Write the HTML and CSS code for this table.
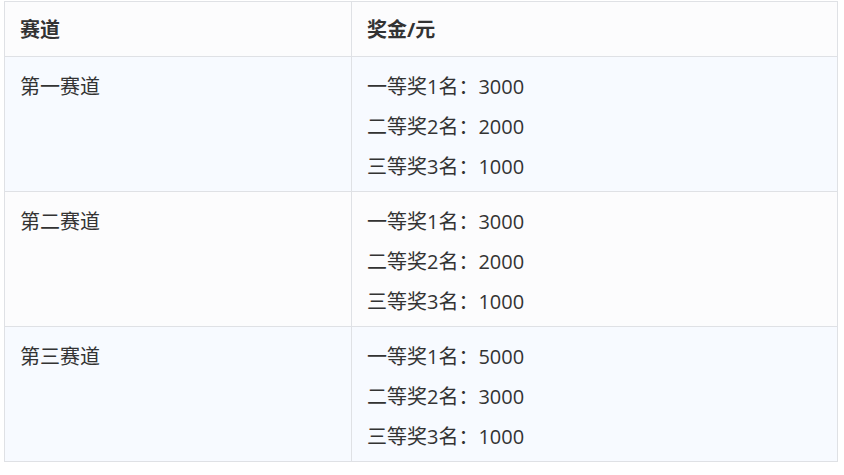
FILE: index.html
```html
<!DOCTYPE html>
<html lang="zh-CN">

<head>
    <meta charset="UTF-8">
    <title>赛道奖金</title>
    <link rel="stylesheet" href="styles.css">
</head>

<body>

    <!-- 奖金表 -->
    <table class="prize-table">
        <thead>
            <tr>
                <th class="col-track">赛道</th>
                <th>奖金/元</th>
            </tr>
        </thead>
        <tbody>
            <tr>
                <td>第一赛道</td>
                <td>
                    <p>一等奖1名：3000</p>
                    <p>二等奖2名：2000</p>
                    <p>三等奖3名：1000</p>
                </td>
            </tr>
            <tr>
                <td>第二赛道</td>
                <td>
                    <p>一等奖1名：3000</p>
                    <p>二等奖2名：2000</p>
                    <p>三等奖3名：1000</p>
                </td>
            </tr>
            <tr>
                <td>第三赛道</td>
                <td>
                    <p>一等奖1名：5000</p>
                    <p>二等奖2名：3000</p>
                    <p>三等奖3名：1000</p>
                </td>
            </tr>
        </tbody>
    </table>

</body>

</html>
```

FILE: styles.css
```css
body,
html {
    margin: 0;
    padding: 0;
    background: #fff;
    font-family: "Open Sans", "Noto Sans CJK SC", sans-serif;
    color: #333;
}

body {
    padding: 1px 6px 0 4px;
}

.prize-table {
    width: 834px;
    border-collapse: collapse;
    font-size: 20px;
}

.prize-table th,
.prize-table td {
    border: 1px solid #dfe1e5;
    padding: 10px 15px 4px 15px;
    text-align: left;
    vertical-align: top;
    line-height: 40px;
}

.prize-table th {
    height: 40px;
    padding: 8px 15px 6px;
    font-weight: bold;
    background-color: #fcfcfd;
}

.col-track {
    width: 316px;
}

.prize-table p {
    margin: 0;
}

.prize-table tbody tr:nth-child(odd) {
    background-color: #f7faff;
}

.prize-table tbody tr:nth-child(even) {
    background-color: #fcfcfd;
}
```
